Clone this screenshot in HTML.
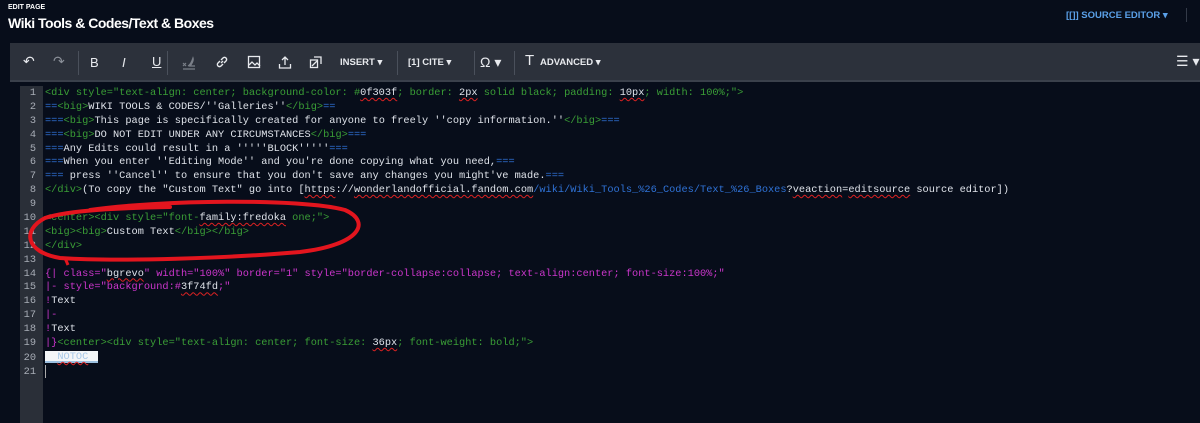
<!DOCTYPE html>
<html><head><meta charset="utf-8"><style>
*{margin:0;padding:0;box-sizing:border-box}
html,body{width:1200px;height:423px;overflow:hidden}
body{background:#070d1a;position:relative;font-family:"Liberation Sans",sans-serif;color:#fff}
.ep{position:absolute;left:8px;top:4px;font-size:7px;font-weight:bold}
.title{position:absolute;left:8px;top:15px;font-size:14px;font-weight:bold;letter-spacing:-0.5px}
.se{position:absolute;left:1066px;top:10px;font-size:9.5px;font-weight:bold;color:#5aa0e8}
.sep2{position:absolute;left:1186px;top:8px;width:1px;height:14px;background:#333a48}
.tb{position:absolute;left:10px;top:43px;width:1190px;height:39px;background:#2c313b;border-bottom:2px solid #3a404b}
.tb .i{position:absolute;top:10px;color:#e8eaee;font-size:14px}
.tb .lbl{position:absolute;top:14px;font-size:9.5px;font-weight:bold;color:#e8eaee}
.tb .s{position:absolute;top:8px;width:1px;height:24px;background:#4a505b}
.gut{position:absolute;left:20px;top:86px;width:23px;height:337px;background:#2a2f38}
.code{position:absolute;left:0;top:87px;font-family:"Liberation Mono",monospace;font-size:10.3px;line-height:13.9px}
.ln{display:block;height:13.9px;white-space:pre}
.n{display:inline-block;width:36px;text-align:right;color:#a8adb6;margin-right:9px}
.g{color:#3a9e36}.b{color:#2f72d6}.m{color:#cc36cc}.w{color:#dfe3ea}
.u{text-decoration:underline wavy #d22;text-decoration-thickness:1px;text-underline-offset:2px}
</style></head><body>
<div class="ep">EDIT PAGE</div>
<div class="title">Wiki Tools &amp; Codes/Text &amp; Boxes</div>
<div class="se">[[]] SOURCE EDITOR ▾</div>
<div class="sep2"></div>
<div class="tb">
<span class="i" style="left:13px">↶</span>
<span class="i" style="left:43px;color:#8a8f98">↷</span>
<span class="s" style="left:68px"></span>
<span class="i" style="left:80px;font-size:13px;top:12px">B</span>
<span class="i" style="left:112px;font-size:13px;top:12px;font-style:italic">I</span>
<span class="i" style="left:142px;font-size:13px;top:11px;text-decoration:underline">U</span>
<span class="s" style="left:157px"></span>
<svg style="position:absolute;left:172px;top:13px" width="14" height="14" viewBox="0 0 14 14" fill="none" stroke="#7a7f88" stroke-width="1.2"><path d="M1 10l3-3M1 7l3 3M6 10c2-1 4-5 5-8 1 3-2 7-3 8h5M1 13h12"/></svg>
<svg style="position:absolute;left:205px;top:12px" width="14" height="14" viewBox="0 0 14 14" fill="none" stroke="#e8eaee" stroke-width="1.4"><path d="M6 8l2-2M5 6L3 8a2 2 0 003 3l2-2M9 8l2-2a2 2 0 00-3-3L6 5"/></svg>
<svg style="position:absolute;left:237px;top:12px" width="14" height="14" viewBox="0 0 14 14" fill="none" stroke="#e8eaee" stroke-width="1.3"><rect x="1.5" y="1.5" width="11" height="11"/><path d="M2 10l3-3 3 3 2-2 3 3"/></svg>
<svg style="position:absolute;left:268px;top:12px" width="14" height="14" viewBox="0 0 14 14" fill="none" stroke="#e8eaee" stroke-width="1.3"><path d="M7 10V2M4 5l3-3 3 3M1.5 9v4h11V9"/></svg>
<svg style="position:absolute;left:299px;top:12px" width="14" height="14" viewBox="0 0 14 14" fill="none" stroke="#e8eaee" stroke-width="1.3"><rect x="1.5" y="5" width="7" height="7.5"/><path d="M5 2h7v7M3 11l5-5"/></svg>
<span class="lbl" style="left:330px">INSERT ▾</span>
<span class="s" style="left:387px"></span>
<span class="lbl" style="left:398px">[1] CITE ▾</span>
<span class="s" style="left:464px"></span>
<span class="i" style="left:470px;font-size:14px;top:11px">Ω ▾</span>
<span class="s" style="left:504px"></span>
<span class="i" style="left:515px;font-size:15px;top:9px">T</span>
<span class="lbl" style="left:530px">ADVANCED ▾</span>
<span class="i" style="left:1166px;top:10px">☰ ▾</span>
</div>
<div class="gut"></div>
<div class="code">
<span class="ln"><span class="n">1</span><span class="g">&lt;div style="text-align: center; background-color: #<span class="w u">0f303f</span>; border: <span class="w u">2px</span> solid black; padding: <span class="w u">10px</span>; width: 100%;"&gt;</span></span>
<span class="ln"><span class="n">2</span><span class="b">==</span><span class="g">&lt;big&gt;</span><span class="w">WIKI TOOLS &amp; CODES/''Galleries''</span><span class="g">&lt;/big&gt;</span><span class="b">==</span></span>
<span class="ln"><span class="n">3</span><span class="b">===</span><span class="g">&lt;big&gt;</span><span class="w">This page is specifically created for anyone to freely ''copy information.''</span><span class="g">&lt;/big&gt;</span><span class="b">===</span></span>
<span class="ln"><span class="n">4</span><span class="b">===</span><span class="g">&lt;big&gt;</span><span class="w">DO NOT EDIT UNDER ANY CIRCUMSTANCES</span><span class="g">&lt;/big&gt;</span><span class="b">===</span></span>
<span class="ln"><span class="n">5</span><span class="b">===</span><span class="w">Any Edits could result in a '''''BLOCK'''''</span><span class="b">===</span></span>
<span class="ln"><span class="n">6</span><span class="b">===</span><span class="w">When you enter ''Editing Mode'' and you're done copying what you need,</span><span class="b">===</span></span>
<span class="ln"><span class="n">7</span><span class="b">===</span><span class="w"> press ''Cancel'' to ensure that you don't save any changes you might've made.</span><span class="b">===</span></span>
<span class="ln"><span class="n">8</span><span class="g">&lt;/div&gt;</span><span class="w">(To copy the "Custom Text" go into [<span class="u">https</span>://<span class="u">wonderlandofficial.fandom.com</span><span class="b">/wiki/Wiki_Tools_%26_Codes/Text_%26_Boxes</span>?<span class="u">veaction</span>=<span class="u">editsource</span> source editor])</span></span>
<span class="ln"><span class="n">9</span></span>
<span class="ln"><span class="n">10</span><span class="g">&lt;center&gt;&lt;div style="font-<span class="w u">family:fredoka</span> one;"&gt;</span></span>
<span class="ln"><span class="n">11</span><span class="g">&lt;big&gt;&lt;big&gt;</span><span class="w">Custom Text</span><span class="g">&lt;/big&gt;&lt;/big&gt;</span></span>
<span class="ln"><span class="n">12</span><span class="g">&lt;/div&gt;</span></span>
<span class="ln"><span class="n">13</span></span>
<span class="ln"><span class="n">14</span><span class="m">{| class="<span class="w u">bgrevo</span>" width="100%" border="1" style="border-collapse:collapse; text-align:center; font-size:100%;"</span></span>
<span class="ln"><span class="n">15</span><span class="m">|- style="background:#<span class="w u">3f74fd</span>;"</span></span>
<span class="ln"><span class="n">16</span><span class="m">!</span><span class="w">Text</span></span>
<span class="ln"><span class="n">17</span><span class="m">|-</span></span>
<span class="ln"><span class="n">18</span><span class="m">!</span><span class="w">Text</span></span>
<span class="ln"><span class="n">19</span><span class="m">|}</span><span class="g">&lt;center&gt;&lt;div style="text-align: center; font-size: <span class="w u">36px</span>; font-weight: bold;"&gt;</span></span>
<span class="ln"><span class="n">20</span><span style="display:inline-block;background:#f4f6f8;color:#a8c8e8;width:53px;height:12px;line-height:12px;border-bottom:2px solid #9cc0e0;vertical-align:middle">  <span class="u">NOTOC</span></span></span>
<span class="ln"><span class="n">21</span><span style="display:inline-block;width:1px;height:13px;background:#aaa;vertical-align:middle"></span></span>
</div>
<svg style="position:absolute;left:0;top:0" width="1200" height="423"><path d="M90 210 C160 200 300 198 345 210 C372 222 360 245 300 252 C230 258 120 262 60 258 C25 252 22 230 45 218 C70 210 120 208 170 207" fill="none" stroke="#e3151e" stroke-width="4" stroke-linecap="round"/><path d="M65 258 L68 265" stroke="#e3151e" stroke-width="3"/></svg>
</body></html>
